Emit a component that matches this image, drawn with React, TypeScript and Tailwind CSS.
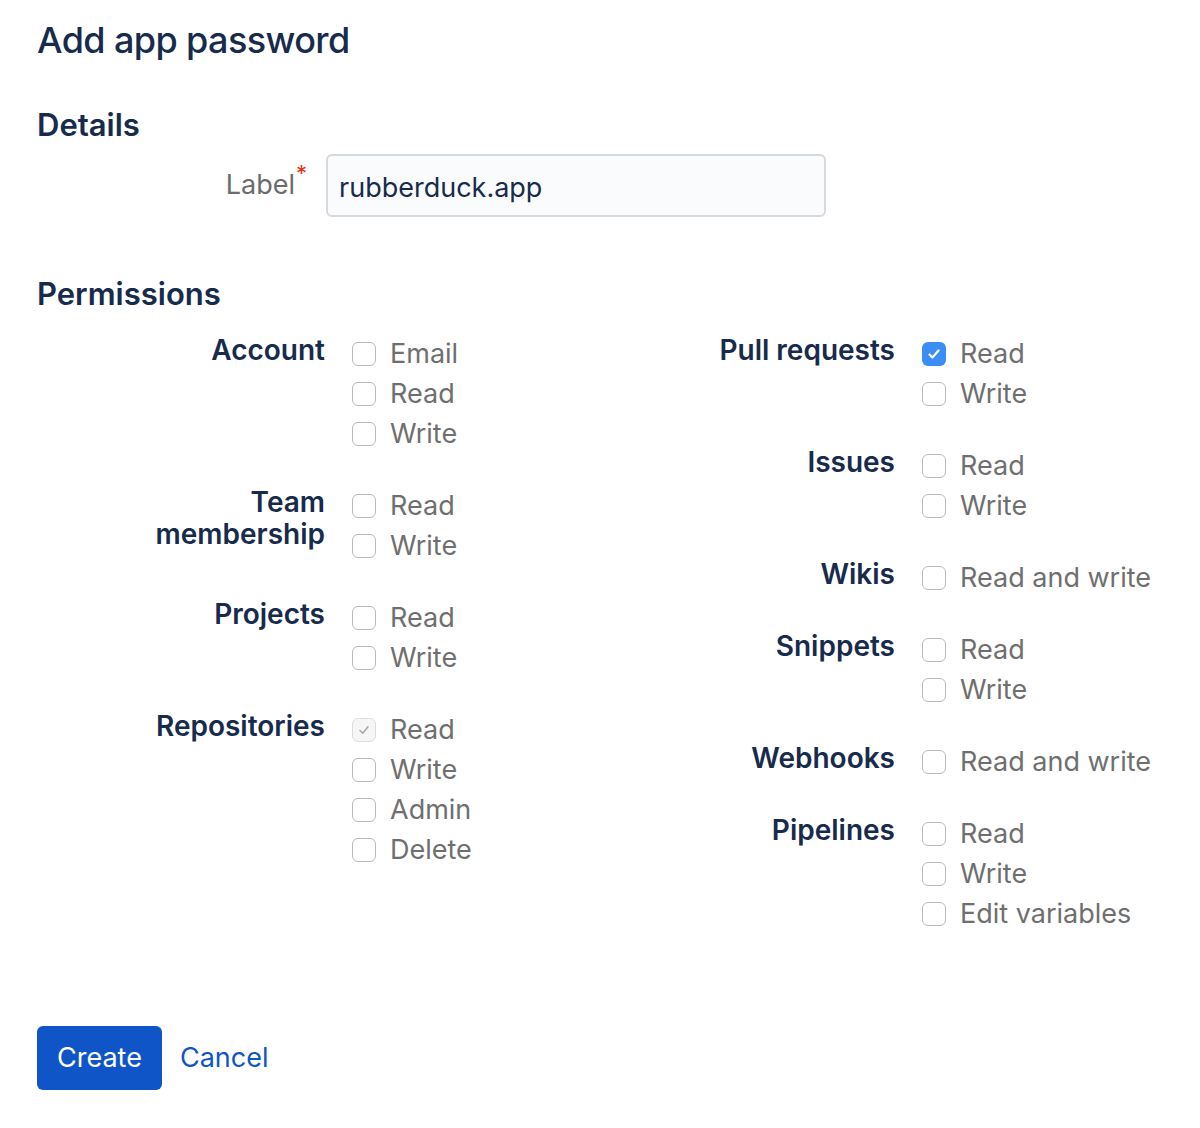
import React from 'react';

type Option = { label: string; checked?: boolean; disabled?: boolean };
type Group = { name: string[]; options: Option[] };

const leftGroups: Group[] = [
  { name: ['Account'], options: [{ label: 'Email' }, { label: 'Read' }, { label: 'Write' }] },
  { name: ['Team', 'membership'], options: [{ label: 'Read' }, { label: 'Write' }] },
  { name: ['Projects'], options: [{ label: 'Read' }, { label: 'Write' }] },
  {
    name: ['Repositories'],
    options: [
      { label: 'Read', checked: true, disabled: true },
      { label: 'Write' },
      { label: 'Admin' },
      { label: 'Delete' },
    ],
  },
];

const rightGroups: Group[] = [
  { name: ['Pull requests'], options: [{ label: 'Read', checked: true }, { label: 'Write' }] },
  { name: ['Issues'], options: [{ label: 'Read' }, { label: 'Write' }] },
  { name: ['Wikis'], options: [{ label: 'Read and write' }] },
  { name: ['Snippets'], options: [{ label: 'Read' }, { label: 'Write' }] },
  { name: ['Webhooks'], options: [{ label: 'Read and write' }] },
  { name: ['Pipelines'], options: [{ label: 'Read' }, { label: 'Write' }, { label: 'Edit variables' }] },
];

const Checkbox: React.FC<{ checked?: boolean; disabled?: boolean }> = ({ checked, disabled }) => {
  if (checked && !disabled) {
    return (
      <span className="w-[24px] h-[24px] rounded-[6px] bg-[#3b8ef3] flex items-center justify-center shrink-0">
        <svg width="16" height="16" viewBox="0 0 16 16" fill="none">
          <path d="M3.5 8.5 L6.5 11.5 L12.5 4.5" stroke="white" strokeWidth="2.2" strokeLinecap="round" strokeLinejoin="round" />
        </svg>
      </span>
    );
  }
  return (
    <span
      className={`w-[24px] h-[24px] rounded-[6px] border-[1.5px] flex items-center justify-center shrink-0 ${
        disabled ? 'border-[#dcdcdc] bg-[#f6f6f6]' : 'border-[#b9b9b9] bg-white'
      }`}
    >
      {checked && (
        <svg width="16" height="16" viewBox="0 0 16 16" fill="none">
          <path d="M4 8.5 L6.8 11.3 L12 4.8" stroke="#a8a8a8" strokeWidth="1.6" strokeLinecap="round" strokeLinejoin="round" />
        </svg>
      )}
    </span>
  );
};

const PermissionColumn: React.FC<{ groups: Group[]; labelWidth: string }> = ({ groups, labelWidth }) => (
  <div className="flex flex-col gap-[32px]">
    {groups.map((g) => (
      <div key={g.name.join(' ')} className="flex gap-[27px]">
        <div className={`${labelWidth} text-right font-semibold text-[28px] leading-[32px] text-[#172b4d] shrink-0`}>
          {g.name.map((n) => (
            <div key={n}>{n}</div>
          ))}
        </div>
        <div className="flex flex-col">
          {g.options.map((o) => (
            <label key={o.label} className="h-[40px] flex items-center gap-[14px]">
              <Checkbox checked={o.checked} disabled={o.disabled} />
              <span className="text-[27px] text-[#6f6f6f] whitespace-nowrap">{o.label}</span>
            </label>
          ))}
        </div>
      </div>
    ))}
  </div>
);

export default function App() {
  return (
    <div className="bg-white min-h-[1128px] w-[1200px] px-[37px] pt-[14px] font-['Inter','Noto_Sans',sans-serif] antialiased">
      <h1 className="text-[36px] leading-[52px] font-medium text-[#172b4d] tracking-[-0.6px]">Add app password</h1>

      <h2 className="mt-[39px] text-[31px] leading-[40px] font-semibold text-[#172b4d]">Details</h2>
      <div className="flex items-center mt-[9px]">
        <div className="w-[258px] text-right text-[27px] text-[#6b6b6b] relative">
          Label
          <span className="absolute -right-[12px] -top-[8px] text-[#de350b] text-[22px]">*</span>
        </div>
        <div className="ml-[31px] w-[500px] h-[63px] rounded-[6px] border-2 border-[#d6d9de] bg-[#fafbfc] flex items-center px-[11px]">
          <span className="text-[27px] text-[#172b4d] mt-[6px]">rubberduck.app</span>
        </div>
      </div>

      <h2 className="mt-[57px] text-[31px] leading-[40px] font-semibold text-[#172b4d]">Permissions</h2>
      <div className="flex mt-[20px]">
        <div className="w-[568px]">
          <PermissionColumn groups={leftGroups} labelWidth="w-[288px]" />
        </div>
        <div>
          <PermissionColumn groups={rightGroups} labelWidth="w-[290px]" />
        </div>
      </div>

      <div className="flex items-center gap-[18px] mt-[92px]">
        <button className="h-[64px] px-[20px] rounded-[6px] bg-[#0f55c8] text-white text-[27px]">Create</button>
        <a className="text-[27px] text-[#0f55c8]">Cancel</a>
      </div>
    </div>
  );
}
